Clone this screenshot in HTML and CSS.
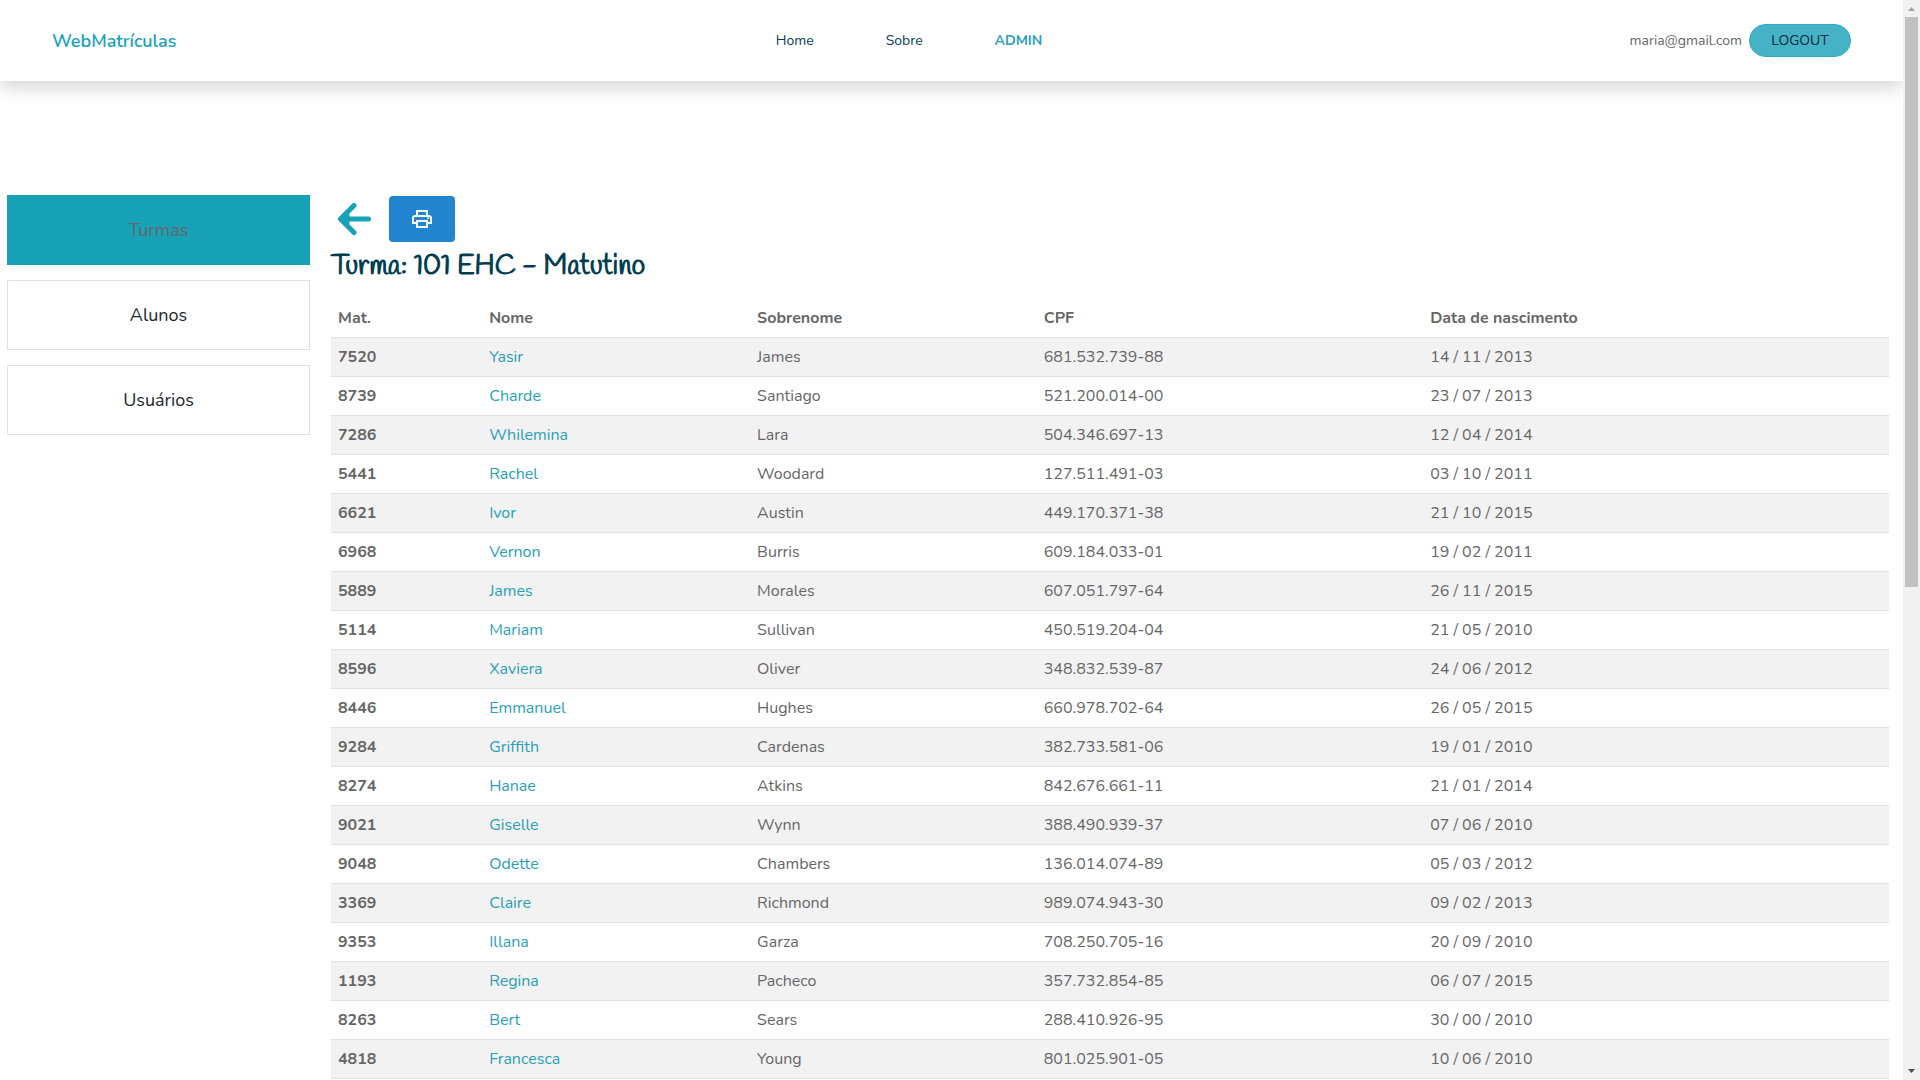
FILE: index.html
```html
<!DOCTYPE html>
<html lang="pt-BR">
<head>
<meta charset="utf-8">
<meta name="viewport" content="width=device-width, initial-scale=1">
<title>WebMatrículas</title>
<link rel="stylesheet" href="styles.css">
</head>
<body>
<div class="page">
  <div class="view">
    <header class="topbar">
      <a class="brand" href="#">WebMatrículas</a>
      <nav class="nav">
        <a href="#">Home</a>
        <a href="#">Sobre</a>
        <a class="active" href="#">ADMIN</a>
      </nav>
      <div class="user">
        <span>maria@gmail.com</span>
        <button class="logout" type="button">LOGOUT</button>
      </div>
    </header>
    <div class="layout">
      <nav class="sidebar">
        <a class="current" href="#">Turmas</a>
        <a href="#">Alunos</a>
        <a href="#">Usuários</a>
      </nav>
      <main class="content">
        <div class="toolbar">
          <a class="back" href="#" aria-label="Voltar">
            <svg viewBox="0 0 34 34" width="34" height="34" fill="none" stroke="currentColor" stroke-width="5" stroke-linecap="round" stroke-linejoin="round"><path d="M16 3.500L2.500 17L16 30.500M3 17H30.500"/><path d="M5 17L9 13V21z"/></svg>
          </a>
          <button class="print" type="button" aria-label="Imprimir">
            <svg viewBox="0 0 24 24" width="24" height="24" fill="currentColor"><path d="M19 8h-1V3H6v5H5c-1.654 0-3 1.346-3 3v6h4v4h12v-4h4v-6c0-1.654-1.346-3-3-3zM8 5h8v3H8V5zm0 14v-4h8v4H8zm12-4h-2v-2H6v2H4v-4c0-.551.449-1 1-1h14c.551 0 1 .449 1 1v4z"/><path d="M17 10.500h2v1.500h-2z"/></svg>
          </button>
        </div>
        <h1 class="title">Turma: 101 EHC - Matutino</h1>
        <table class="students">
          <colgroup><col class="c-mat"><col class="c-name"><col class="c-last"><col class="c-cpf"><col></colgroup>
          <thead>
            <tr><th scope="col">Mat.</th><th scope="col">Nome</th><th scope="col">Sobrenome</th><th scope="col">CPF</th><th scope="col">Data de nascimento</th></tr>
          </thead>
          <tbody>
            <tr><th scope="row">7520</th><td><a href="#">Yasir</a></td><td>James</td><td>681.532.739-88</td><td>14 / 11 / 2013</td></tr>
            <tr><th scope="row">8739</th><td><a href="#">Charde</a></td><td>Santiago</td><td>521.200.014-00</td><td>23 / 07 / 2013</td></tr>
            <tr><th scope="row">7286</th><td><a href="#">Whilemina</a></td><td>Lara</td><td>504.346.697-13</td><td>12 / 04 / 2014</td></tr>
            <tr><th scope="row">5441</th><td><a href="#">Rachel</a></td><td>Woodard</td><td>127.511.491-03</td><td>03 / 10 / 2011</td></tr>
            <tr><th scope="row">6621</th><td><a href="#">Ivor</a></td><td>Austin</td><td>449.170.371-38</td><td>21 / 10 / 2015</td></tr>
            <tr><th scope="row">6968</th><td><a href="#">Vernon</a></td><td>Burris</td><td>609.184.033-01</td><td>19 / 02 / 2011</td></tr>
            <tr><th scope="row">5889</th><td><a href="#">James</a></td><td>Morales</td><td>607.051.797-64</td><td>26 / 11 / 2015</td></tr>
            <tr><th scope="row">5114</th><td><a href="#">Mariam</a></td><td>Sullivan</td><td>450.519.204-04</td><td>21 / 05 / 2010</td></tr>
            <tr><th scope="row">8596</th><td><a href="#">Xaviera</a></td><td>Oliver</td><td>348.832.539-87</td><td>24 / 06 / 2012</td></tr>
            <tr><th scope="row">8446</th><td><a href="#">Emmanuel</a></td><td>Hughes</td><td>660.978.702-64</td><td>26 / 05 / 2015</td></tr>
            <tr><th scope="row">9284</th><td><a href="#">Griffith</a></td><td>Cardenas</td><td>382.733.581-06</td><td>19 / 01 / 2010</td></tr>
            <tr><th scope="row">8274</th><td><a href="#">Hanae</a></td><td>Atkins</td><td>842.676.661-11</td><td>21 / 01 / 2014</td></tr>
            <tr><th scope="row">9021</th><td><a href="#">Giselle</a></td><td>Wynn</td><td>388.490.939-37</td><td>07 / 06 / 2010</td></tr>
            <tr><th scope="row">9048</th><td><a href="#">Odette</a></td><td>Chambers</td><td>136.014.074-89</td><td>05 / 03 / 2012</td></tr>
            <tr><th scope="row">3369</th><td><a href="#">Claire</a></td><td>Richmond</td><td>989.074.943-30</td><td>09 / 02 / 2013</td></tr>
            <tr><th scope="row">9353</th><td><a href="#">Illana</a></td><td>Garza</td><td>708.250.705-16</td><td>20 / 09 / 2010</td></tr>
            <tr><th scope="row">1193</th><td><a href="#">Regina</a></td><td>Pacheco</td><td>357.732.854-85</td><td>06 / 07 / 2015</td></tr>
            <tr><th scope="row">8263</th><td><a href="#">Bert</a></td><td>Sears</td><td>288.410.926-95</td><td>30 / 00 / 2010</td></tr>
            <tr><th scope="row">4818</th><td><a href="#">Francesca</a></td><td>Young</td><td>801.025.901-05</td><td>10 / 06 / 2010</td></tr>
          </tbody>
        </table>
      </main>
    </div>
  </div>
  <div class="scrollbar" aria-hidden="true">
    <svg class="up" viewBox="0 0 17 17" width="17" height="17"><path d="M5 11L8.500 7L12 11z"/></svg>
    <div class="track"><div class="thumb"></div></div>
    <svg class="down" viewBox="0 0 17 17" width="17" height="17"><path d="M5 6L8.500 10L12 6z"/></svg>
  </div>
</div>
</body>
</html>
```
FILE: styles.css
```css
* { box-sizing: border-box; }

body {
  margin: 0;
  background: #fff;
  color: #666;
  font: 400 16px/24px Nunito, Lato, "Open Sans", sans-serif;
}

a { color: #2a9fb8; text-decoration: none; }
svg { display: block; }

.page { display: flex; height: 100vh; overflow: hidden; }
.view { flex: 1; min-width: 0; overflow: hidden; }

.topbar {
  display: flex;
  align-items: center;
  justify-content: space-between;
  padding: 24px 52px;
  box-shadow: 0 8px 16px rgba(0, 0, 0, .15);
}
.brand { color: #17a2b8; font-size: 18px; font-weight: 600; }
.nav { display: flex; gap: 72px; margin-left: 12px; font-size: 14px; }
.nav a { color: #023e52; }
.nav .active { color: #2a9fb8; font-weight: 700; }
.user { display: flex; align-items: center; gap: 7px; font-size: 14px; }
.logout {
  width: 102px;
  height: 33px;
  padding: 0;
  border: 1px solid #2fabbf;
  border-radius: 17px;
  background: #45b3c5;
  color: #012a3a;
  font: inherit;
}

.layout {
  display: grid;
  grid-template-columns: 303fr 1558fr;
  gap: 21px;
  padding: 114px 14px 0 7px;
}

.sidebar { display: flex; flex-direction: column; gap: 15px; }
.sidebar a {
  display: flex;
  align-items: center;
  justify-content: center;
  height: 70px;
  border: 1px solid #dee2e6;
  color: #212529;
  font-size: 18px;
}
.sidebar .current { border-color: #17a2b8; background: #17a2b8; color: #666; }

.toolbar { display: flex; align-items: center; gap: 17px; padding: 1px 7px 0; }
.back { color: #17a2b8; }
.print {
  display: flex;
  align-items: center;
  justify-content: center;
  width: 66px;
  height: 46px;
  padding: 0;
  border: 0;
  border-radius: 4px;
  background: #2185d0;
  color: #fff;
}
.title {
  margin: 7px 0 14px;
  color: #023e52;
  font-family: Handlee, "Indie Flower", "Patrick Hand", "Architects Daughter", Kalam, Caveat, "Comic Neue", Nunito, cursive;
  font-size: 28px;
  line-height: 36px;
  font-weight: 700;
}

.students { width: 100%; border-collapse: collapse; table-layout: fixed; }
.students th,
.students td {
  padding: 7px;
  border-bottom: 1px solid #dee2e6;
  text-align: left;
}
.students tbody tr:nth-child(odd) { background: #f2f2f2; }
.c-mat { width: 9.7%; }
.c-name { width: 17.2%; }
.c-last { width: 18.4%; }
.c-cpf { width: 24.8%; }

.scrollbar { display: flex; flex-direction: column; width: 17px; background: #f1f1f1; }
.track { flex: 1; padding: 0 2px; }
.thumb { height: 54.500%; background: #c1c1c1; }
.up { fill: #a3a3a3; }
.down { fill: #505050; }
```
